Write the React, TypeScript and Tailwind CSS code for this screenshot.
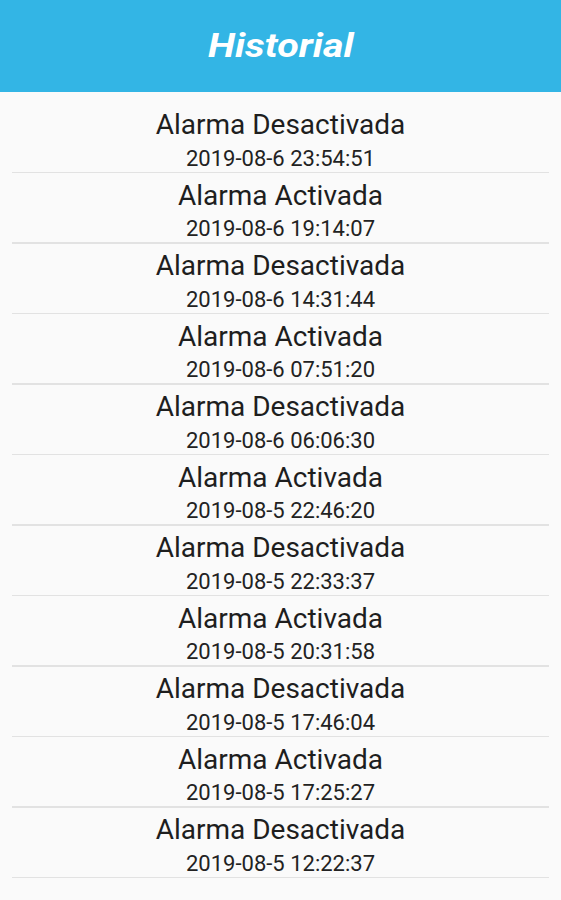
const entries = [
  { title: 'Alarma Desactivada', date: '2019-08-6 23:54:51' },
  { title: 'Alarma Activada', date: '2019-08-6 19:14:07' },
  { title: 'Alarma Desactivada', date: '2019-08-6 14:31:44' },
  { title: 'Alarma Activada', date: '2019-08-6 07:51:20' },
  { title: 'Alarma Desactivada', date: '2019-08-6 06:06:30' },
  { title: 'Alarma Activada', date: '2019-08-5 22:46:20' },
  { title: 'Alarma Desactivada', date: '2019-08-5 22:33:37' },
  { title: 'Alarma Activada', date: '2019-08-5 20:31:58' },
  { title: 'Alarma Desactivada', date: '2019-08-5 17:46:04' },
  { title: 'Alarma Activada', date: '2019-08-5 17:25:27' },
  { title: 'Alarma Desactivada', date: '2019-08-5 12:22:37' },
  { title: 'Alarma Activada', date: '2019-08-5 07:12:15' },
];

function HistoryRow({ title, date }: { title: string; date: string }) {
  return (
    <div className="flex flex-col">
      <div className="flex flex-col items-center pt-[6.2px] text-[#1e1e1e]">
        <span className="text-[28px] leading-[32px]">{title}</span>
        <span className="mt-[4.8px] text-[22px] leading-[26px] text-[#222]">{date}</span>
      </div>
      <div className="mx-3 h-[1.5px] bg-[#e2e2e2]" />
    </div>
  );
}

export default function App() {
  return (
    <div className="h-screen overflow-hidden bg-[#fafafa] font-['Roboto',sans-serif]">
      <header className="flex h-[92px] items-center justify-center bg-[#33b5e5] pb-[2px]">
        <h1 className="inline-block scale-x-[1.16] text-[34px] font-bold italic text-white">Historial</h1>
      </header>
      <div className="h-[797px] overflow-hidden pt-[11px]">
        {entries.map((e, i) => (
          <HistoryRow key={i} title={e.title} date={e.date} />
        ))}
      </div>
    </div>
  );
}
